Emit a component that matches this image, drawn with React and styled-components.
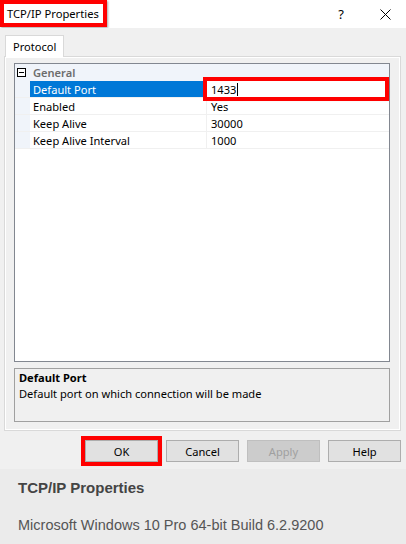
import React from 'react';
import styled, { createGlobalStyle } from 'styled-components';

const GlobalStyle = createGlobalStyle`
    html, body {
        margin: 0;
        padding: 0;
        background: #ebebeb;
    }
    * {
        box-sizing: border-box;
    }
`;

const ui = `"Noto Sans", "Open Sans", sans-serif`;

const Page = styled.div`
    width: 406px;
    height: 544px;
    display: flex;
    flex-direction: column;
    font-family: ${ui};
    font-size: 11.1px;
    color: #000;
    overflow: hidden;
`;

const TitleBar = styled.div`
    height: 28px;
    background: #fff;
    display: flex;
    align-items: flex-start;
`;
const TitleText = styled.div`
    height: 27px;
    padding: 0 4px 0 3px;
    display: flex;
    align-items: center;
    border: 4px solid #ff0000;
    box-shadow: 1px 1px 2px rgba(0, 0, 0, 0.35);
    font-size: 11.2px;
`;
const TitleButtons = styled.div`
    margin-left: auto;
    height: 28px;
    display: flex;
    align-items: center;
`;
const TitleButton = styled.div`
    width: ${p => p.w || 46}px;
    height: 28px;
    display: flex;
    align-items: center;
    justify-content: center;
    font-size: 13px;
`;

const Dialog = styled.div`
    background: #f0f0f0;
    padding: 7px 5px 7px 4px;
    display: flex;
    flex-direction: column;
`;

const Tabs = styled.div`
    display: flex;
    padding-left: 1px;
    position: relative;
    z-index: 1;
`;
const Tab = styled.div`
    height: 22px;
    padding: 0 7px;
    display: flex;
    align-items: center;
    background: #fff;
    border: 1px solid #d9d9d9;
    border-bottom: none;
`;

const TabPanel = styled.div`
    height: 375px;
    margin-top: -1px;
    border: 1px solid #d9d9d9;
    box-shadow: inset 0 0 0 1px #fff;
    padding: 6px 10px 8px 9px;
    display: flex;
    flex-direction: column;
`;

const Grid = styled.div`
    height: 300px;
    background: #fff;
    border: 1px solid #828790;
    display: flex;
    flex-direction: column;
`;

const Row = styled.div`
    height: 17px;
    display: grid;
    grid-template-columns: 15px 177px 1fr;
    border-bottom: 1px solid #f0f0f0;
`;
const CategoryRow = styled.div`
    height: 17px;
    display: flex;
    align-items: center;
    background: #f0f4fa;
`;
const Toggle = styled.div`
    width: 9px;
    height: 9px;
    margin: 0 7px 0 2px;
    border: 1px solid #000;
    background: #fff;
    display: flex;
    align-items: center;
    justify-content: center;
    &::after {
        content: '';
        width: 5px;
        height: 1px;
        background: #000;
    }
`;
const CategoryName = styled.div`
    font-weight: 600;
    color: #6d6d6d;
`;
const Gutter = styled.div`
    background: #f0f4fa;
`;
const Name = styled.div`
    padding-left: 3px;
    display: flex;
    align-items: center;
    color: ${p => (p.selected ? '#fff' : '#000')};
    background: ${p => (p.selected ? '#0078d7' : '#fff')};
    border-right: 1px solid #f0f0f0;
`;
const Value = styled.div`
    padding-left: 4px;
    display: flex;
    align-items: center;
    position: relative;
`;
const EditValue = styled(Value)`
    margin-right: 4px;
    outline: 4px solid #ff0000;
    outline-offset: 0;
    box-shadow: 2px 2px 3px rgba(0, 0, 0, 0.35);
    z-index: 1;
`;
const Caret = styled.span`
    display: inline-block;
    width: 1px;
    height: 13px;
    margin-left: 1px;
    background: #000;
`;

const Description = styled.div`
    height: 54px;
    margin-top: 6px;
    border: 1px solid #a0a0a0;
    padding: 1px 4px;
    line-height: 16px;
`;
const DescTitle = styled.div`
    font-weight: 700;
`;

const ButtonRow = styled.div`
    margin-top: 9px;
    display: flex;
    justify-content: flex-end;
    gap: 8px;
`;
const Button = styled.div`
    width: 73px;
    height: 22px;
    display: flex;
    align-items: center;
    justify-content: center;
    background: ${p => (p.disabled ? '#cccccc' : '#e1e1e1')};
    color: ${p => (p.disabled ? '#a0a0a0' : '#000')};
    border: 1px solid ${p => (p.disabled ? '#bfbfbf' : '#adadad')};
    outline: ${p => (p.marked ? '4px solid #ff0000' : 'none')};
    outline-offset: 0;
    box-shadow: ${p => (p.marked ? '2px 2px 3px rgba(0,0,0,0.35)' : 'none')};
`;

const Footer = styled.div`
    flex: 1;
    background: #ebebeb;
    padding: 10px 18px 0;
    font-family: "Liberation Sans", Arial, sans-serif;
`;
const FooterTitle = styled.div`
    font-size: 15px;
    font-weight: 700;
    color: #444;
`;
const FooterText = styled.div`
    margin-top: 21px;
    font-size: 14.5px;
    color: #555;
`;

const rows = [
    { name: 'Enabled', value: 'Yes' },
    { name: 'Keep Alive', value: '30000' },
    { name: 'Keep Alive Interval', value: '1000' },
];

const App = () => {
    return (
        <Page>
            <GlobalStyle />
            <TitleBar>
                <TitleText>TCP/IP Properties</TitleText>
                <TitleButtons>
                    <TitleButton w={46}>?</TitleButton>
                    <TitleButton w={42}>
                        <svg width="11" height="11" viewBox="0 0 11 11">
                            <path d="M0.5 0.5 L10.5 10.5 M10.5 0.5 L0.5 10.5" stroke="#000" strokeWidth="1" />
                        </svg>
                    </TitleButton>
                </TitleButtons>
            </TitleBar>
            <Dialog>
                <Tabs>
                    <Tab>Protocol</Tab>
                </Tabs>
                <TabPanel>
                    <Grid>
                        <CategoryRow>
                            <Toggle />
                            <CategoryName>General</CategoryName>
                        </CategoryRow>
                        <Row>
                            <Gutter />
                            <Name selected>Default Port</Name>
                            <EditValue>1433<Caret /></EditValue>
                        </Row>
                        {rows.map(r => (
                            <Row key={r.name}>
                                <Gutter />
                                <Name>{r.name}</Name>
                                <Value>{r.value}</Value>
                            </Row>
                        ))}
                    </Grid>
                    <Description>
                        <DescTitle>Default Port</DescTitle>
                        <div>Default port on which connection will be made</div>
                    </Description>
                </TabPanel>
                <ButtonRow>
                    <Button marked>OK</Button>
                    <Button>Cancel</Button>
                    <Button disabled>Apply</Button>
                    <Button>Help</Button>
                </ButtonRow>
            </Dialog>
            <Footer>
                <FooterTitle>TCP/IP Properties</FooterTitle>
                <FooterText>Microsoft Windows 10 Pro 64-bit Build 6.2.9200</FooterText>
            </Footer>
        </Page>
    );
};
export default App;
